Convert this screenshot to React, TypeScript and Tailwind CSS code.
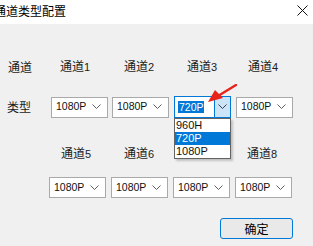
import React from "react";

const ui = { fontFamily: '"Noto Sans CJK SC", "Liberation Sans", sans-serif' };
const latin = { fontFamily: '"Liberation Sans", Arial, sans-serif' };

function Chevron({ color = "#606060" }: { color?: string }) {
  return (
    <svg width="9" height="6" viewBox="0 0 9 6" className="shrink-0">
      <path d="M0.5 0.5 L4.5 4.5 L8.5 0.5" fill="none" stroke={color} strokeWidth="1" />
    </svg>
  );
}

function Label({ text, num, className }: { text: string; num?: string; className: string }) {
  return (
    <div className={`text-[12px] leading-[14px] text-[#1a1a1a] ${className}`} style={ui}>
      {text}
      {num && (
        <span className="text-[11px]" style={latin}>
          {num}
        </span>
      )}
    </div>
  );
}

function Combo({ value, className }: { value: string; className: string }) {
  return (
    <div
      className={`h-[21px] w-[57px] bg-white border border-[#a9a9a9] flex items-center pl-[4px] pr-[6px] justify-between ${className}`}
    >
      <span className="text-[10.5px] text-[#111]" style={latin}>
        {value}
      </span>
      <Chevron />
    </div>
  );
}

function OpenCombo({ className }: { className: string }) {
  const options = ["960H", "720P", "1080P"];
  return (
    <div className={`relative ${className}`}>
      <div className="h-[22px] w-[57px] bg-white border border-[#0078d7] flex">
        <div className="flex-1 flex items-center pl-[3px]">
          <span
            className="bg-[#0078d7] text-white text-[10.5px] leading-[12px] px-[1px] w-[26px] h-[12px]"
            style={latin}
          >
            720P
          </span>
        </div>
        <div className="w-[16px] bg-[#cce4f7] border-l border-[#0078d7] flex items-center justify-center">
          <Chevron color="#404040" />
        </div>
      </div>
      <div className="absolute left-0 top-[22px] w-[57px] bg-white border border-[#646464] shadow-[2px_2px_2px_rgba(0,0,0,0.2)] z-10">
        {options.map((o) => (
          <div
            key={o}
            className={`h-[13px] leading-[13px] pl-[1px] text-[11px] ${o === "720P" ? "bg-[#0078d7] text-white" : "text-[#111]"}`}
            style={latin}
          >
            {o}
          </div>
        ))}
      </div>
      <svg className="absolute left-[32px] top-[-12px] z-20" width="32" height="21" viewBox="0 0 32 21">
        <path d="M30 1 L12 12" stroke="#e8231a" strokeWidth="2.4" strokeLinecap="round" />
        <path d="M2 18 L9 6 L17 14 Z" fill="#e8231a" />
      </svg>
    </div>
  );
}

export default function App() {
  return (
    <div className="w-[313px] h-[246px] bg-[#f0f0f0] overflow-hidden relative select-none">
      <div className="h-[24px] bg-white flex items-center justify-between">
        <div className="text-[12px] text-black ml-[-6px] mt-[-3px]" style={ui}>
          通道类型配置
        </div>
        <svg className="mr-[5px] mt-[-4px]" width="11" height="11" viewBox="0 0 11 11">
          <path d="M0.5 0.5 L10.5 10.5 M10.5 0.5 L0.5 10.5" stroke="#111" strokeWidth="1" />
        </svg>
      </div>

      <div className="flex items-center mt-[35px]">
        <Label text="通道" className="ml-[8px] w-[52px]" />
        <Label text="通道" num="1" className="w-[64px]" />
        <Label text="通道" num="2" className="w-[63px]" />
        <Label text="通道" num="3" className="w-[61px]" />
        <Label text="通道" num="4" className="" />
      </div>

      <div className="flex items-center mt-[22px]">
        <Label text="类型" className="ml-[7px] w-[44px]" />
        <Combo value="1080P" className="" />
        <Combo value="1080P" className="ml-[4px]" />
        <OpenCombo className="ml-[5px]" />
        <Combo value="1080P" className="ml-[5px]" />
      </div>

      <div className="flex items-center mt-[28px]">
        <Label text="通道" num="5" className="ml-[61px] w-[63px]" />
        <Label text="通道" num="6" className="w-[62px]" />
        <Label text="通道" num="7" className="w-[61px]" />
        <Label text="通道" num="8" className="" />
      </div>

      <div className="flex items-center mt-[16px] pl-[49px] gap-[5px]">
        <Combo value="1080P" className="" />
        <Combo value="1080P" className="" />
        <Combo value="1080P" className="" />
        <Combo value="1080P" className="" />
      </div>

      <div className="flex justify-end mt-[20px] pr-[20px]">
        <button
          className="w-[73px] h-[21px] bg-[#e9e9e9] border border-[#0078d7] rounded-[3px] text-[12px] text-black flex items-center justify-center"
          style={ui}
        >
          确定
        </button>
      </div>
    </div>
  );
}
